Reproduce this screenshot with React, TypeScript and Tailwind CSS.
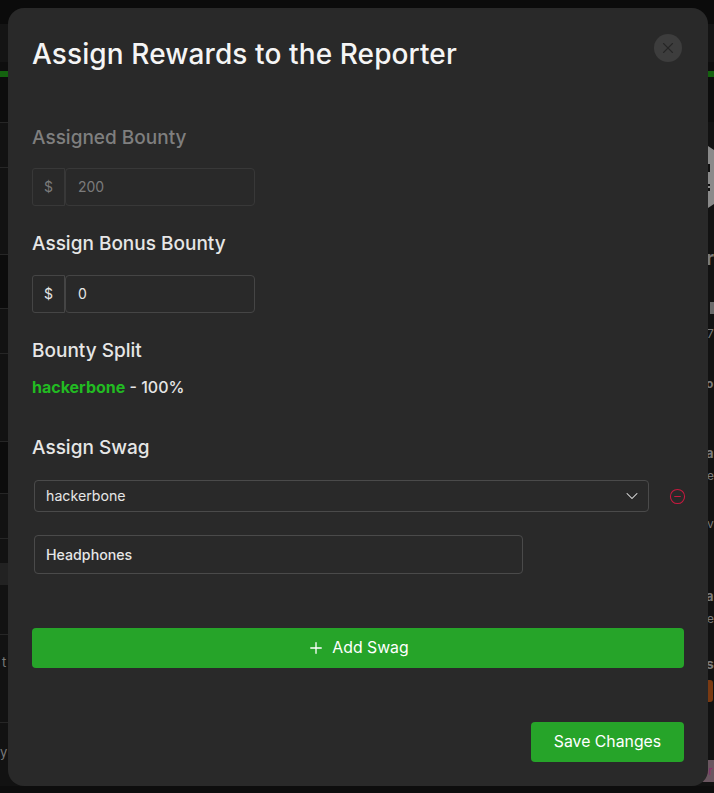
import { ChevronDown, Plus, X, CircleMinus } from "lucide-react";

const LeftLine = ({ y }: { y: string }) => <div className={`absolute left-0 w-2 h-px bg-[#262626] ${y}`} />;

function Background() {
  return (
    <div className="absolute inset-0 overflow-hidden bg-[#121212] text-[#7a7a7a] font-['Inter',sans-serif]">
      <div className="h-[24px] bg-[#0b0b0b]" />
      <div className="h-[38px] bg-[#141414]" />
      <div className="h-[9px] bg-[#0e0e0e]" />
      <div className="h-[6px] bg-[#14630f]" />
      <div className="h-[45px] bg-[#0d0d0d]" />
      <div className="absolute left-0 top-[254px] w-2 h-[54px] bg-[#0c0c0c]" />
      <div className="absolute left-0 top-[441px] w-2 h-[52px] bg-[#0c0c0c]" />
      <div className="absolute left-0 top-[563px] w-2 h-[22px] bg-[#222222]" />
      <svg className="absolute left-[708px] top-[144px]" width="6" height="66" viewBox="0 0 6 66">
        <polygon points="0,2 6,6 6,60 0,64" fill="#8a8a8a" />
        <rect x="0" y="20" width="2" height="8" fill="#111111" />
        <rect x="0" y="40" width="2" height="2" fill="#111111" />
        <rect x="0" y="44" width="2" height="3" fill="#111111" />
      </svg>
      <div className="absolute left-[2px] top-[654px] text-[13px] leading-4">t</div>
      <div className="absolute left-0 top-[744px] text-[13px] leading-4">y</div>
      <div className="absolute left-[706px] top-[246px] text-[20px] font-bold leading-6">r</div>
      <div className="absolute right-0 top-[302px] w-[4px] h-3 bg-[#6b6b6b]" />
      <div className="absolute left-[707px] top-[326px] text-[12px] leading-4">7</div>
      <div className="absolute left-[706px] top-[376px] text-[12px] font-bold leading-4">o</div>
      <div className="absolute left-[706px] top-[445px] text-[13px] font-bold leading-4">a</div>
      <div className="absolute left-[707px] top-[468px] text-[12px] leading-4">e</div>
      <div className="absolute left-[707px] top-[516px] text-[12px] leading-4">v</div>
      <div className="absolute left-[706px] top-[588px] text-[13px] font-bold leading-4">a</div>
      <div className="absolute left-[707px] top-[611px] text-[12px] leading-4">e</div>
      <div className="absolute left-[706px] top-[656px] text-[14px] font-bold leading-4">s</div>
      <div className="absolute left-[704px] top-[680px] w-[9px] h-[22px] rounded-r-[3px] bg-[#7a3a12]" />
      <div className="absolute left-[700px] top-[760px] w-[14px] h-[22px] bg-[#6a5660]" />
      <div className="absolute left-[702px] top-[763px] text-[11px] leading-4 text-[#8a2a6a]">or</div>
      <div className="absolute right-0 left-0 bottom-0 h-[7px] bg-[#0d0d0d]" />
      <LeftLine y="top-[122px]" />
      <LeftLine y="top-[167px]" />
      <LeftLine y="top-[254px]" />
      <LeftLine y="top-[308px]" />
      <LeftLine y="top-[353px]" />
      <LeftLine y="top-[441px]" />
      <LeftLine y="top-[493px]" />
      <LeftLine y="top-[538px]" />
      <LeftLine y="top-[634px]" />
      <LeftLine y="top-[722px]" />
    </div>
  );
}

function MoneyField({ value, disabled }: { value: string; disabled?: boolean }) {
  const tone = disabled ? "text-[#7b7b7b] border-[#383838]" : "text-[#e6e6e6] border-[#454545]";
  return (
    <div className="flex w-[223px] h-[38px]">
      <div className={`w-[33px] flex items-center justify-center rounded-l-[3px] border text-sm ${tone}`}>$</div>
      <div className={`flex-1 flex items-center pl-3 rounded-[4px] border text-sm ${tone}`}>{value}</div>
    </div>
  );
}

export default function App() {
  return (
    <div className="relative w-[714px] h-[793px] overflow-hidden font-['Inter',sans-serif]">
      <Background />
      <div className="absolute left-2 top-2 w-[700px] h-[778px] rounded-[16px] bg-[#292929] px-6 flex flex-col">
        <div className="absolute right-[26px] top-[26px] w-7 h-7 rounded-full bg-[#3d3d3d] flex items-center justify-center text-[#262626]">
          <X size={18} strokeWidth={1.5} />
        </div>
        <h2 className="mt-[27px] text-[28px] leading-[38px] font-[550] tracking-[0.1px] text-[#f5f5f5]">Assign Rewards to the Reporter</h2>
        <h3 className="mt-[53px] text-[19px] leading-6 font-[550] text-[#7f7f7f]">Assigned Bounty</h3>
        <div className="mt-[18px]"><MoneyField value="200" disabled /></div>
        <h3 className="mt-[26px] text-[19px] leading-6 font-[550] text-[#e6e6e6]">Assign Bonus Bounty</h3>
        <div className="mt-[19px]"><MoneyField value="0" /></div>
        <h3 className="mt-[26px] text-[19px] leading-6 font-[550] text-[#e6e6e6]">Bounty Split</h3>
        <p className="mt-[12px] text-base leading-6 font-medium text-[#e6e6e6]">
          <span className="font-bold text-[#22bb22]">hackerbone</span> - 100%
        </p>
        <h3 className="mt-[37px] text-[19px] leading-6 font-[550] text-[#e6e6e6]">Assign Swag</h3>
        <div className="mt-[20px] ml-[2px] flex items-center">
          <div className="shrink-0 w-[615px] h-8 rounded-[4px] border border-[#4a4a4a] flex items-center justify-between pl-[11px] pr-[6px] text-[14.2px] text-[#e6e6e6]">
            <span>hackerbone</span>
            <ChevronDown size={20} strokeWidth={1.25} />
          </div>
          <CircleMinus size={17} strokeWidth={1.5} className="shrink-0 ml-[20px] text-[#c8193f]" />
        </div>
        <div className="mt-[23px] ml-[2px] w-[489px] h-[39px] rounded-[4px] border border-[#4a4a4a] flex items-center pl-[11px] text-[14.2px] font-[550] text-[#e6e6e6]">Headphones</div>
        <button className="mt-[54px] h-10 w-full rounded-[4px] bg-[#26a429] text-white text-[15.8px] pb-[1px] flex items-center justify-center gap-[7px]">
          <Plus size={18} strokeWidth={1.75} />Add Swag
        </button>
        <div className="mt-[54px] flex justify-end">
          <button className="w-[153px] h-10 rounded-[4px] bg-[#26a429] text-white text-[15.8px]">Save Changes</button>
        </div>
      </div>
    </div>
  );
}
